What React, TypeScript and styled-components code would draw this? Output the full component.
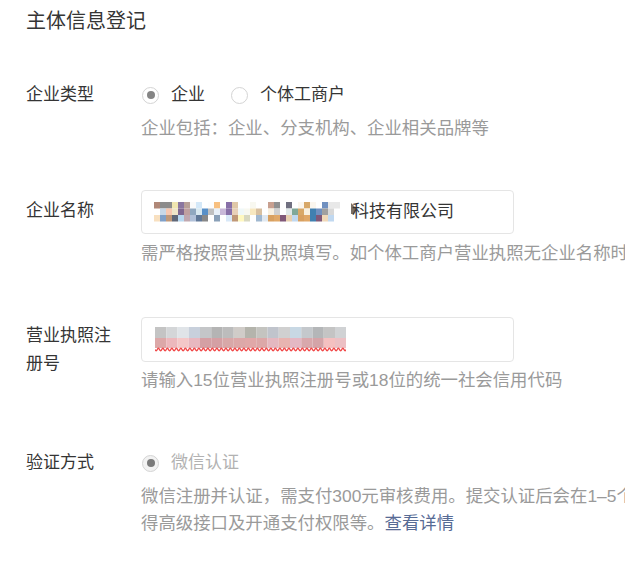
import React from 'react';
import styled, { createGlobalStyle } from 'styled-components';

const GlobalStyle = createGlobalStyle`
  html, body {
    margin: 0;
    padding: 0;
    background: #ffffff;
    overflow: hidden;
  }
  body {
    font-family: 'Liberation Sans', 'Noto Sans CJK SC', sans-serif;
    color: #353535;
  }
`;

// colours of the blurred company name (3 rows)
const nameMosaic: string[][] = [
  ['#b08878', '#8c8c8c', '#8c8c8c', '#f0e6b0', '#8a76a0', '#b8a098', '#fafafa', '#d4e8f8', '', '#fdfdfd', '#f8c080', '', '#8870a8', '#e0c8a8', '', '', '#f8f8f0', '', '', '#c8a090', '#909090', '', '#707080', '', '#fbf6ee', '#d8a868', '#fbf6ee', '', '#7090c0', '#e8e8e8', '#e8e8e8', '', ''],
  ['', '#c8d8e8', '#f8c8b0', '#f0e6c8', '#806890', '#c0a0a0', '#90a8c0', '#d8e8f0', '#5890c8', '#c0c0c0', '#e8f0f8', '#c8b8d8', '#8870a8', '#e8d0b8', '#f0f8f8', '#f8f8f0', '#f8e8c0', '#d8c0a0', '', '#f8f0e0', '#d0d0d0', '', '#e0e8e8', '#80a898', '#d8a868', '#f8f0e0', '#4080b0', '#7090c0', '#a0a0a0', '#d8d8d8', '', '', ''],
  ['#f8e0c0', '#80a0c8', '#c09878', '#606878', '#b8d8f0', '#c0a8b0', '#b0c0d8', '#607898', '#888888', '', '#8aa0b8', '', '#d8e8f8', '#c09878', '#fff8c0', '#d8d8c0', '', '#a0b8d0', '#e0e8f0', '#d8a060', '#e0a868', '#805878', '#e8d0b0', '#c0d8f0', '#d8a060', '#e0a868', '#4080b0', '#805878', '#f0d8b8', '#c0d8f0', '', '', ''],
];

const numberTop = ['#c4c4c4', '#d4d6d8', '#e0e4e8', '#c8d0dc', '#c4c6c8', '#b4b4b4', '#bcbcbc', '#d0ccc8', '#b4b4ac', '#c4c4c0', '#c0c4cc', '#d0d0d0', '#c8d8e4', '#c4c8cc', '#b4b6b8', '#c4c4c4', '#d0d2d4'];
const numberBottom = ['#dca8a8', '#ecb8bc', '#f4c8c8', '#e8b8c0', '#d4a0a4', '#d4a0a4', '#d8a8a8', '#dca8a8', '#e0a8a8', '#dca8a8', '#e4b8c0', '#e8b4b0', '#e4b8c4', '#d8a8ac', '#d4a4a8', '#f4c0c0', '#ecc0c4'];

const NameMosaic: React.FC = () => {
  const cw = 6;
  const ch = 6.5;
  const w = nameMosaic[0].length * cw + 4;
  return (
    <MosaicSvg width={w} height={ch * 3} viewBox={`0 0 ${w} ${ch * 3}`}>
      {nameMosaic.map((row, r) =>
        row.map((c, i) => (c ? <rect key={`${r}-${i}`} x={i * cw} y={r * ch} width={cw} height={ch} fill={c} /> : null))
      )}
      <path d="M197 1 L202 6 L200 12 L197 12 Z" fill="#7a6f64" />
    </MosaicSvg>
  );
};

const NumberMosaic: React.FC = () => {
  const cw = 11.25;
  const width = numberTop.length * cw;
  let wave = `M0 22.5`;
  for (let x = 0; x < width; x += 4.5) {
    wave += ` Q${x + 1.1} 25 ${x + 2.25} 22.5 T${x + 4.5} 22.5`;
  }
  return (
    <MosaicSvg width={width} height={25} viewBox={`0 0 ${width} 25`}>
      {numberTop.map((c, i) => (
        <rect key={`t${i}`} x={i * cw} y={0} width={cw} height={11} fill={c} />
      ))}
      {numberBottom.map((c, i) => (
        <rect key={`b${i}`} x={i * cw} y={11} width={cw} height={10} fill={c} />
      ))}
      <path d={wave} fill="none" stroke="#f04848" strokeWidth={1.4} />
    </MosaicSvg>
  );
};

const App: React.FC = () => {
  return (
    <Page>
      <GlobalStyle />
      <Title>主体信息登记</Title>

      <Row $mt={46}>
        <Label>企业类型</Label>
        <Field>
          <RadioGroup>
            <RadioItem>
              <RadioCircle $checked />
              <RadioText>企业</RadioText>
            </RadioItem>
            <RadioItem>
              <RadioCircle />
              <RadioText>个体工商户</RadioText>
            </RadioItem>
          </RadioGroup>
          <Hint>企业包括：企业、分支机构、企业相关品牌等</Hint>
        </Field>
      </Row>

      <Row $mt={48}>
        <Label $pt={7}>企业名称</Label>
        <Field>
          <InputBox $h={44}>
            <NameMosaic />
            <InputText>科技有限公司</InputText>
          </InputBox>
          <Hint>需严格按照营业执照填写。如个体工商户营业执照无企业名称时，请填写“个体户+经营者姓名”</Hint>
        </Field>
      </Row>

      <Row $mt={50}>
        <Label $pt={5}>
          营业执照注
          <br />
          册号
        </Label>
        <Field>
          <InputBox $h={45} $pl={13}>
            <NumberMosaic />
          </InputBox>
          <Hint $mt={5}>请输入15位营业执照注册号或18位的统一社会信用代码</Hint>
        </Field>
      </Row>

      <Row $mt={55}>
        <Label>验证方式</Label>
        <Field>
          <RadioGroup>
            <RadioItem>
              <RadioCircle $checked $disabled />
              <RadioText $disabled>微信认证</RadioText>
            </RadioItem>
          </RadioGroup>
          <Hint>
            微信注册并认证，需支付300元审核费用。提交认证后会在1–5个工作日内完成审核，认证成功后可获
            <br />
            得高级接口及开通支付权限等。<Link href="#">查看详情</Link>
          </Hint>
        </Field>
      </Row>
    </Page>
  );
};

export default App;

const Page = styled.div`
  padding: 7px 0 0 26px;
  width: 599px;
  height: 554px;
  overflow: hidden;
`;

const Title = styled.h2`
  margin: 0;
  font-size: 20px;
  line-height: 28px;
  font-weight: 400;
  color: #353535;
`;

const Row = styled.div<{ $mt: number }>`
  display: grid;
  grid-template-columns: 115px 1fr;
  margin-top: ${({ $mt }) => $mt}px;
`;

const Label = styled.div<{ $pt?: number }>`
  padding-top: ${({ $pt }) => $pt ?? 0}px;
  font-size: 17px;
  line-height: 28px;
  color: #353535;
`;

const Field = styled.div`
  min-width: 0;
`;

const RadioGroup = styled.div`
  display: flex;
  align-items: center;
  gap: 26px;
  height: 28px;
  padding-left: 1px;
`;

const RadioItem = styled.label`
  display: flex;
  align-items: center;
  gap: 12px;
  cursor: pointer;
`;

const RadioCircle = styled.span<{ $checked?: boolean; $disabled?: boolean }>`
  position: relative;
  width: 17px;
  height: 17px;
  box-sizing: border-box;
  border-radius: 50%;
  border: 1px solid #d4d4d4;
  background: ${({ $disabled }) => ($disabled ? '#f2f2f2' : '#ffffff')};

  &::after {
    content: '';
    display: ${({ $checked }) => ($checked ? 'block' : 'none')};
    position: absolute;
    left: 3.5px;
    top: 3.5px;
    width: 8px;
    height: 8px;
    border-radius: 50%;
    background: ${({ $disabled }) => ($disabled ? '#7a7a7a' : '#858585')};
  }
`;

const RadioText = styled.span<{ $disabled?: boolean }>`
  font-size: 17px;
  line-height: 28px;
  color: ${({ $disabled }) => ($disabled ? '#b2b2b2' : '#353535')};
`;

const Hint = styled.div<{ $mt?: number }>`
  margin-top: ${({ $mt }) => $mt ?? 6}px;
  font-size: 17.4px;
  line-height: 27px;
  color: #9a9a9a;
  white-space: nowrap;
`;

const Link = styled.a`
  color: #576b95;
  text-decoration: none;
`;

const InputBox = styled.div<{ $h: number; $pl?: number }>`
  display: flex;
  align-items: center;
  box-sizing: border-box;
  width: 373px;
  height: ${({ $h }) => $h}px;
  padding-left: ${({ $pl }) => $pl ?? 12}px;
  border: 1px solid #e5e5e5;
  border-radius: 4px;
  background: #ffffff;
`;

const MosaicSvg = styled.svg`
  display: block;
  flex-shrink: 0;
`;

const InputText = styled.span`
  font-size: 17px;
  line-height: 24px;
  color: #353535;
  margin-left: -4px;
`;
